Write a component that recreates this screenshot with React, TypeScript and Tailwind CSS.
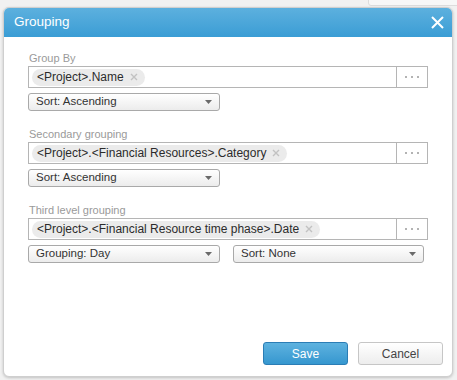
import React from "react";

function Dots() {
  return (
    <div className="flex w-[31px] shrink-0 items-center justify-center gap-[4px] border-l border-[#b5b5b5]">
      <span className="h-[2px] w-[2px] rounded-full bg-[#9a9a9a]" />
      <span className="h-[2px] w-[2px] rounded-full bg-[#9a9a9a]" />
      <span className="h-[2px] w-[2px] rounded-full bg-[#9a9a9a]" />
    </div>
  );
}

function Chip({ text }: { text: string }) {
  return (
    <div className="flex h-[17px] items-center rounded-full bg-[#ebebeb] pl-[5px] pr-[7px] text-[12px] leading-[17px] text-[#2b2b2b]">
      <span>{text}</span>
      <svg width="8" height="8" viewBox="0 0 8 8" className="ml-[6px]">
        <path d="M1 1L7 7M7 1L1 7" stroke="#c2c2c2" strokeWidth="1.4" />
      </svg>
    </div>
  );
}

function Field({ text }: { text: string }) {
  return (
    <div className="mt-[1px] flex h-[22px] border border-[#b5b5b5] bg-white">
      <div className="flex flex-1 items-center pl-[3px]">
        <Chip text={text} />
      </div>
      <Dots />
    </div>
  );
}

function Select({ text, w }: { text: string; w: string }) {
  return (
    <div
      className={`flex h-[18px] items-center justify-between rounded-[3px] border border-[#a9a9a9] bg-gradient-to-b from-white to-[#ececec] pl-[7px] pr-[7px] text-[11.5px] text-[#333] ${w}`}
    >
      <span>{text}</span>
      <svg width="7" height="4" viewBox="0 0 7 4">
        <path d="M0 0H7L3.5 4Z" fill="#6a6a6a" />
      </svg>
    </div>
  );
}

function Label({ text }: { text: string }) {
  return <div className="h-[14px] pl-[1px] text-[11px] leading-[14px] text-[#9a9a9a]">{text}</div>;
}

export default function App() {
  return (
    <div
      className="relative h-[380px] w-[457px] overflow-hidden bg-[#f1f1f1] pl-[3px] pt-[7px]"
      style={{ fontFamily: '"Liberation Sans", Arial, sans-serif' }}
    >
      <div className="absolute right-[-4px] top-[-6px] h-[12px] w-[93px] rounded-[3px] border border-[#dcdcdc] bg-[#f7f7f7]" />
      <div className="relative flex h-[370px] w-[450px] flex-col rounded-[6px] border border-[#cfcfcf] bg-white shadow-[0_1px_3px_rgba(0,0,0,0.2)]">
        <div className="flex h-[29px] shrink-0 items-center justify-between rounded-t-[5px] bg-gradient-to-b from-[#5cb0de] to-[#3a9dd5] pl-[10px] pr-[8px]">
          <span className="text-[13.5px] text-white">Grouping</span>
          <svg width="13" height="13" viewBox="0 0 13 13">
            <path d="M1 1L12 12M12 1L1 12" stroke="white" strokeWidth="2" />
          </svg>
        </div>
        <div className="flex flex-1 flex-col px-[24px] pt-[14px]">
          <Label text="Group By" />
          <Field text="<Project>.Name" />
          <div className="mt-[5px]">
            <Select text="Sort: Ascending" w="w-[192px]" />
          </div>
          <div className="mt-[16px]">
            <Label text="Secondary grouping" />
          </div>
          <Field text="<Project>.<Financial Resources>.Category" />
          <div className="mt-[5px]">
            <Select text="Sort: Ascending" w="w-[192px]" />
          </div>
          <div className="mt-[16px]">
            <Label text="Third level grouping" />
          </div>
          <Field text="<Project>.<Financial Resource time phase>.Date" />
          <div className="mt-[5px] flex gap-[13px]">
            <Select text="Grouping: Day" w="w-[192px]" />
            <Select text="Sort: None" w="w-[191px]" />
          </div>
        </div>
        <div className="flex justify-end gap-[10px] pb-[11px] pr-[9px]">
          <button className="h-[23px] w-[85px] rounded-[3px] border border-[#2b7db5] bg-gradient-to-b from-[#5db2df] to-[#3597cf] text-[12px] text-white">
            Save
          </button>
          <button className="h-[23px] w-[85px] rounded-[3px] border border-[#c6c6c6] bg-gradient-to-b from-white to-[#ededed] text-[12px] text-[#444]">
            Cancel
          </button>
        </div>
      </div>
    </div>
  );
}
